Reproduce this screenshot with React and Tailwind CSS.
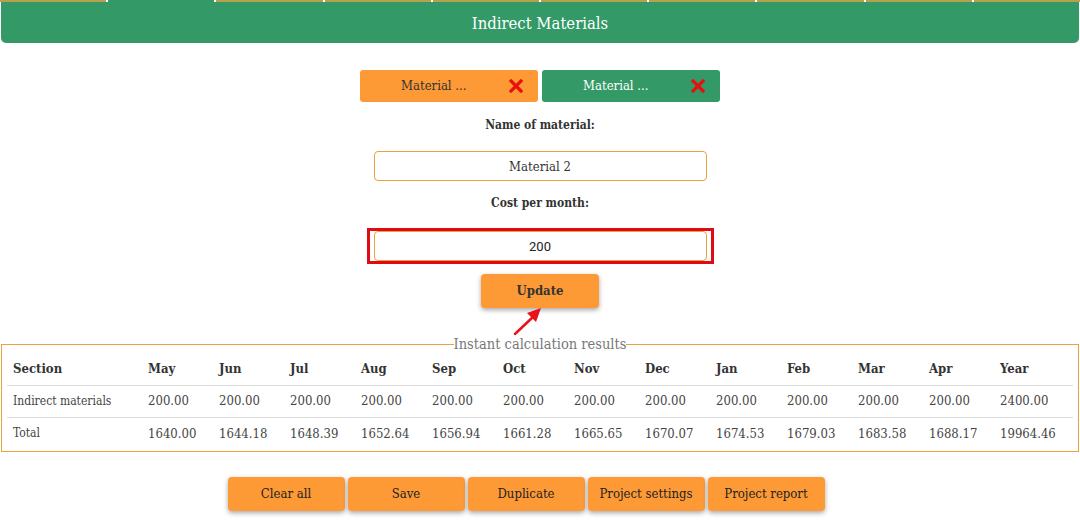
import { useState } from 'react';

const months = ['May', 'Jun', 'Jul', 'Aug', 'Sep', 'Oct', 'Nov', 'Dec', 'Jan', 'Feb', 'Mar', 'Apr'];
const totals = ['1640.00', '1644.18', '1648.39', '1652.64', '1656.94', '1661.28', '1665.65', '1670.07', '1674.53', '1679.03', '1683.58', '1688.17'];

const slab = { fontFamily: '"DejaVu Serif Condensed", "DejaVu Serif", "Liberation Serif", serif' };

function CloseX() {
  return (
    <svg width="14" height="14" viewBox="0 0 14 14" className="shrink-0">
      <path d="M2 2 L12 12 M12 2 L2 12" stroke="#e8100e" strokeWidth="3.2" strokeLinecap="square" />
    </svg>
  );
}

export default function App() {
  const [name, setName] = useState('Material 2');
  const [cost, setCost] = useState('200');

  return (
    <div className="w-[1080px] h-[522px] bg-white text-[#333] overflow-hidden" style={slab}>
      {/* Tab strip (mostly scrolled out of view) */}
      <div className="flex gap-[2px] h-[2px]">
        {Array.from({ length: 10 }).map((_, i) => (
          <div key={i} className={i === 1 ? 'flex-1 bg-[#339966]' : 'flex-1 bg-[#b9a04e]'} />
        ))}
      </div>

      {/* Header */}
      <div className="mx-px h-[41px] pt-[3px] bg-[#339966] rounded-b-[5px] flex items-center justify-center">
        <h1 className="text-white text-[16.5px]">Indirect Materials</h1>
      </div>

      {/* Form */}
      <div className="relative flex flex-col items-center">
        <div className="flex gap-[4px] mt-[27px]">
          <button className="w-[178px] h-[32px] bg-[#fe9a36] rounded-[3px] flex items-center pl-[41px] pr-[15px] text-[13px] text-[#333]" style={slab}>
            <span className="flex-1 text-left">Material ...</span>
            <CloseX />
          </button>
          <button className="w-[178px] h-[32px] bg-[#339966] rounded-[3px] flex items-center pl-[41px] pr-[15px] text-[13px] text-white" style={slab}>
            <span className="flex-1 text-left">Material ...</span>
            <CloseX />
          </button>
        </div>

        <label className="mt-[13px] h-[20px] leading-[20px] text-[12px] font-bold">Name of material:</label>
        <input
          value={name}
          onChange={(e) => setName(e.target.value)}
          className="mt-[16px] w-[333px] h-[30px] border border-[#e9a23b] rounded-[4px] text-center text-[13px] text-[#333] outline-none"
          style={slab}
        />

        <label className="mt-[12px] h-[20px] leading-[20px] text-[12px] font-bold">Cost per month:</label>
        <div className="mt-[15px] w-[347px] h-[36px] border-[3px] border-[#e00a14] px-[4px]">
          <input
            value={cost}
            onChange={(e) => setCost(e.target.value)}
            className="w-full h-[30px] border border-[#e9a23b] rounded-[4px] text-center text-[13px] text-[#222] outline-none"
            style={{ fontFamily: 'Roboto, "Liberation Sans", sans-serif' }}
          />
        </div>

        <button className="mt-[10px] w-[118px] h-[34px] bg-[#fe9a36] rounded-[4px] shadow-[0_2px_5px_rgba(0,0,0,0.35)] text-[13px] font-bold text-[#333]" style={slab}>
          Update
        </button>

        {/* Annotation arrow */}
        <svg className="absolute left-[510px] top-[261px]" width="36" height="34" viewBox="0 0 36 34">
          <path d="M5 30 L24 12" stroke="#e8121a" strokeWidth="2.5" strokeLinecap="round" />
          <path d="M31 4 L17 9 L26 18 Z" fill="#e8121a" />
        </svg>
      </div>

      {/* Results */}
      <fieldset className="mt-[27px] mx-px border border-[#e6a43e] px-[5px] pb-[2px] pt-0">
        <legend className="mx-auto px-0 text-[#777] text-[14.5px] leading-[18px]">Instant calculation results</legend>
        <table className="w-full table-fixed border-collapse text-left">
          <colgroup>
            <col className="w-[135px]" />
            {months.map((m) => (
              <col key={m} className="w-[71px]" />
            ))}
            <col />
          </colgroup>
          <thead>
            <tr className="h-[32px] border-b border-[#ddd] text-[13px] text-[#333]">
              <th className="pl-[6px] font-bold">Section</th>
              {months.map((m) => (
                <th key={m} className="pl-[6px] font-bold">{m}</th>
              ))}
              <th className="pl-[6px] font-bold">Year</th>
            </tr>
          </thead>
          <tbody className="text-[13px] text-[#444]">
            <tr className="h-[32px] border-b border-[#ddd]">
              <td className="pl-[6px] text-[12px]">Indirect materials</td>
              {months.map((m) => (
                <td key={m} className="pl-[6px]">200.00</td>
              ))}
              <td className="pl-[6px]">2400.00</td>
            </tr>
            <tr className="h-[32px]">
              <td className="pl-[6px] text-[12px]">Total</td>
              {totals.map((t, i) => (
                <td key={i} className="pl-[6px]">{t}</td>
              ))}
              <td className="pl-[6px]">19964.46</td>
            </tr>
          </tbody>
        </table>
      </fieldset>

      {/* Actions */}
      <div className="mt-[25px] flex justify-center gap-[3px] pr-[28px]">
        {['Clear all', 'Save', 'Duplicate', 'Project settings', 'Project report'].map((b) => (
          <button
            key={b}
            className="w-[117px] h-[34px] bg-[#fe9a36] rounded-[4px] shadow-[0_2px_5px_rgba(0,0,0,0.35)] text-[13px] text-[#222]"
            style={slab}
          >
            {b}
          </button>
        ))}
      </div>
    </div>
  );
}
